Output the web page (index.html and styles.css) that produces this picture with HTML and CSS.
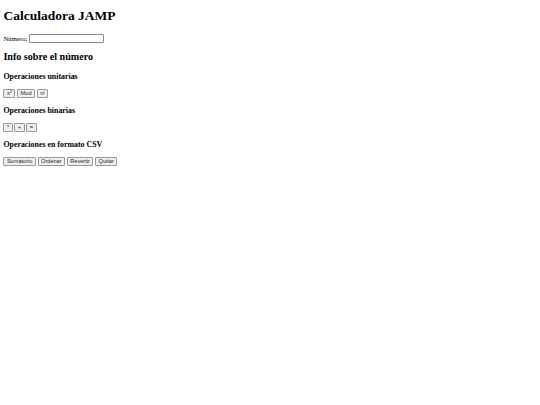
FILE: index.html
```html
<!DOCTYPE html>
<html lang="es">
<head>
<meta charset="utf-8">
<title>Calculadora JAMP</title>
<link rel="stylesheet" href="styles.css">
</head>
<body>
<h1 class="title">Calculadora JAMP</h1>
<div class="field-row">
  <label for="numero" class="label">Número:</label>
  <input type="text" id="numero" class="field">
</div>
<h2 class="subtitle">Info sobre el número</h2>
<h3 class="section">Operaciones unitarias</h3>
<div class="ops"><button class="btn">x<sup class="sup">2</sup></button><button class="btn">Mod</button><button class="btn">n!</button></div>
<h3 class="section">Operaciones binarias</h3>
<div class="ops"><button class="btn">*</button><button class="btn">+</button><button class="btn">=</button></div>
<h3 class="section">Operaciones en formato CSV</h3>
<div class="ops"><button class="btn">Sumatorio</button><button class="btn">Ordenar</button><button class="btn">Revertir</button><button class="btn">Quitar</button></div>
</body>
</html>
```
FILE: styles.css
```css
html, body {
  margin: 0;
  padding: 0;
  background: #fff;
}
body {
  padding: 0 3.4px;
  font-family: "Liberation Serif", "Times New Roman", serif;
  font-size: 6.75px;
  color: #000;
}
.title {
  margin: 8px 0 0;
  font-size: 13.5px;
  line-height: 15px;
  font-weight: bold;
}
.field-row {
  margin-top: 11px;
  height: 9px;
  display: flex;
  align-items: center;
  gap: 2px;
}
.label {
  font-size: 6.75px;
  line-height: 9px;
}
.field {
  box-sizing: border-box;
  width: 75px;
  height: 9px;
  margin: 0;
  padding: 0 1px;
  border: 1px solid #8a8a8a;
  border-radius: 1px;
  background: #fff;
  font-size: 5.6px;
}
.subtitle {
  margin: 8px 0 9px;
  font-size: 10.1px;
  line-height: 12px;
  font-weight: bold;
}
.section {
  margin: 8px 0;
  font-size: 7.9px;
  line-height: 9px;
  font-weight: bold;
}
.ops {
  display: flex;
  gap: 1.7px;
}
.btn {
  box-sizing: border-box;
  height: 9px;
  margin: 0;
  padding: 0 2.5px;
  border: 1px solid #9a9a9a;
  border-radius: 1px;
  background: #efefef;
  color: #222;
  font-family: "Liberation Sans", Arial, sans-serif;
  font-size: 5.6px;
  line-height: 7px;
}
.sup {
  font-size: 4px;
  line-height: 0;
  vertical-align: 2px;
}
```
